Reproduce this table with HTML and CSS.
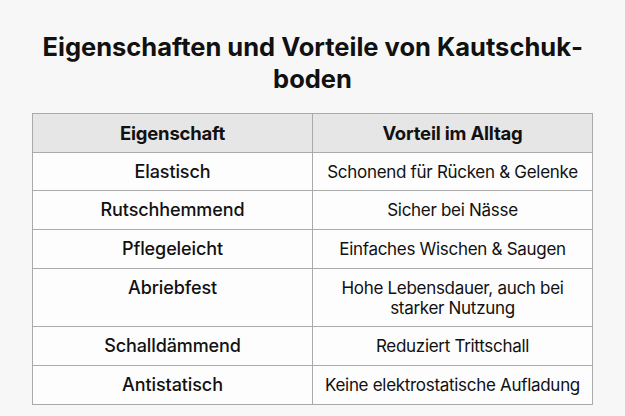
FILE: index.html
```html
<!DOCTYPE html>
<html lang="de">
<head>
<meta charset="utf-8">
<title>Eigenschaften und Vorteile von Kautschukboden</title>
<link rel="stylesheet" href="styles.css">
</head>
<body>
<main class="page">
  <h1 class="title">Eigenschaften und Vorteile von Kautschuk&shy;boden</h1>
  <table class="props">
    <thead>
      <tr><th>Eigenschaft</th><th>Vorteil im Alltag</th></tr>
    </thead>
    <tbody>
      <tr><td class="name">Elastisch</td><td>Schonend für Rücken &amp; Gelenke</td></tr>
      <tr><td class="name">Rutschhemmend</td><td>Sicher bei Nässe</td></tr>
      <tr><td class="name">Pflegeleicht</td><td>Einfaches Wischen &amp; Saugen</td></tr>
      <tr><td class="name">Abriebfest</td><td>Hohe Lebensdauer, auch bei<br>starker Nutzung</td></tr>
      <tr><td class="name">Schalldämmend</td><td>Reduziert Trittschall</td></tr>
      <tr><td class="name">Antistatisch</td><td>Keine elektrostatische Aufladung</td></tr>
    </tbody>
  </table>
</main>
</body>
</html>
```
FILE: styles.css
```css
html, body {
  margin: 0;
  padding: 0;
  background: #f7f7f7;
}
body {
  font-family: Inter, "Noto Sans", "Liberation Sans", sans-serif;
  color: #111;
}
.page {
  padding: 31px 32px 0;
}
.title {
  margin: 0 0 18px;
  font-size: 25.5px;
  line-height: 32px;
  font-weight: 700;
  text-align: center;
  padding: 0 8px;
}
.props {
  width: 561px;
  border-collapse: collapse;
  table-layout: fixed;
  background: #fdfdfd;
}
.props th, .props td {
  border: 1px solid #aaa;
  text-align: center;
  vertical-align: top;
  font-size: 17px;
  line-height: 20px;
  padding: 9px 4px 8.7px;
  white-space: nowrap;
}
.props th {
  background: #e6e6e6;
  font-weight: 700;
  font-size: 18.5px;
  letter-spacing: -0.2px;
}
.props td {
  font-weight: 400;
  letter-spacing: -0.3px;
}
.props td.name {
  font-weight: 500;
  font-size: 18px;
  letter-spacing: -0.1px;
}
```
